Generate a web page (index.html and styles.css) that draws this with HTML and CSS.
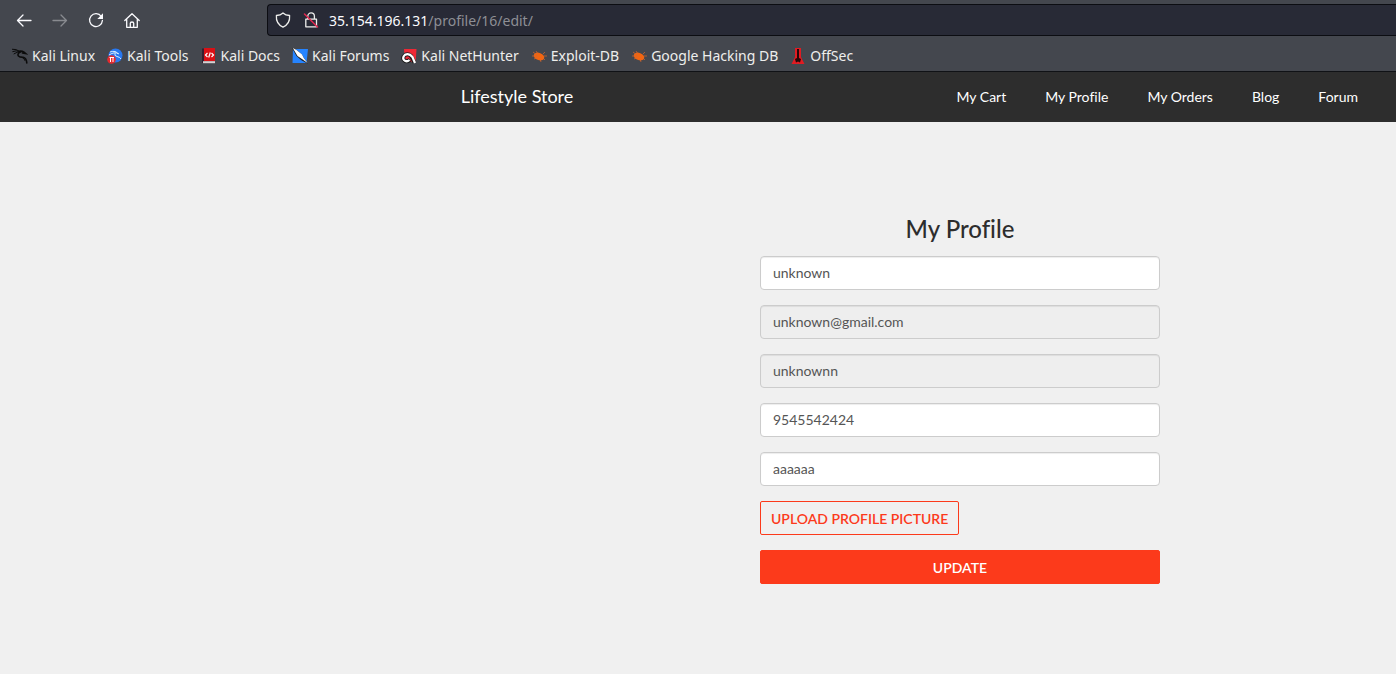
FILE: index.html
```
<!DOCTYPE html>
<html lang="en">
<head>
<meta charset="utf-8">
<title>My Profile - Lifestyle Store</title>
<link rel="stylesheet" href="styles.css">
</head>
<body>
<div class="browser">
  <div class="toolbar">
    <div class="controls">
      <button class="tool" aria-label="Back"><svg viewBox="0 0 16 16"><path d="M15 8.500H1.500M7 3 1.500 8.500 7 14"/></svg></button>
      <button class="tool tool-off" aria-label="Forward" disabled><svg viewBox="0 0 16 16"><path d="M1 8.500h13.500M9 3 14.500 8.500 9 14"/></svg></button>
      <button class="tool" aria-label="Reload"><svg viewBox="0 0 16 16"><path d="M13.300 4.500A6.400 6.400 0 1 0 14.400 8.500"/><path class="solid" d="M15 1.300v5.700H9.300z"/></svg></button>
      <button class="tool" aria-label="Home"><svg viewBox="0 0 16 16"><path d="M.8 8.500 8 1.700 15.200 8.500M2.700 7v8.300h10.600V7M6.300 15.300v-4.100q0-1.200 1.700-1.200t1.700 1.200v4.100"/></svg></button>
    </div>
    <div class="address">
      <svg class="address-icon" viewBox="0 0 16 16"><path d="M8 .9Q10.500 3.200 14.600 3.500 15.300 11.700 8 15.100.7 11.700 1.400 3.500 5.500 3.200 8 .9z"/></svg>
      <svg class="address-icon" viewBox="0 0 16 16"><path d="M4.800 7V4.200a3.300 3.300 0 0 1 6.600 0V7M2.800 7.200h10.700v7.600H2.800z"/><path class="slash" d="M1.500 2 14.500 15"/></svg>
      <span class="url"><span class="host">35.154.196.131</span>/profile/16/edit/</span>
    </div>
  </div>
  <nav class="bookmarks" aria-label="Bookmarks">
    <a href="#"><svg viewBox="0 0 16 16"><g fill="none" stroke="#0b0b0b" stroke-linecap="round"><path d="M.3 1.200Q4 .8 7.500 3.200M.8 3.500Q4 2 8 3.600M2 5.800Q5 3.500 8.500 4" /><path stroke-width="1.600" d="M7.500 3.200Q10 2.800 12 4.200L13.500 5.500 10.500 5M8 4Q5 6 6.500 8 8 9.500 11 9.300 14.500 10 14.800 15"/><path d="M10 9.300q2.500 1 3 3.200"/></g></svg>Kali Linux</a>
    <a href="#"><svg viewBox="0 0 16 16"><circle cx="8.500" cy="7.500" r="7" fill="#2878f0"/><path d="M3 4Q9 2 11 6M2 7Q8 3 12 6M8 5Q7 8 10 8.500T14 11" fill="none" stroke="#d9ecff"/><circle cx="4.500" cy="11.500" r="4.300" fill="#e5292e"/><path d="M2.500 9.500H7M3.500 9.500V14M6 9.500V14" stroke="#fff" fill="none"/></svg>Kali Tools</a>
    <a href="#"><svg viewBox="0 0 16 16"><path d="M1 .5h3V15H1z" fill="#352030"/><path d="M3 0h11v13H3z" fill="#d91015"/><path d="M2 13.200h12v2H2z" fill="#d9d2d2"/><path d="M6.500 5 4.500 7l2 2M10.500 5l2 2-2 2M9.300 4.500 7.700 9.500" fill="none" stroke="#fff" stroke-width="1.200"/></svg>Kali Docs</a>
    <a href="#"><svg viewBox="0 0 16 16"><path d="M1 1h15l-1.500 14H.5z" fill="#2684ff"/><path d="M0 0 4 1.500 9.500 6 12 10l3.800 5.800L9 12 4.500 8z" fill="#222"/><path d="M.8 0 4.500 2 9.800 6.300 11.800 10l3.700 5-5.500-4L5.500 8z" fill="#fff"/></svg>Kali Forums</a>
    <a href="#"><svg viewBox="0 0 16 16"><path d="M3 1h12.500l-.8 13H4z" fill="#ee2835"/><path d="M13.500 14.500 10 8Q7 5 4 7 1 9.500 3 12 5.500 14.500 9 12" fill="none" stroke="#1d1d1d" stroke-width="4"/><path d="M14 15 11.500 9Q8 4.500 4 6.800 1 9.500 3 12 5.500 14.500 8.500 12" fill="none" stroke="#fff" stroke-width="2.200"/></svg>Kali NetHunter</a>
    <a href="#"><svg viewBox="0 0 16 16"><ellipse cx="8" cy="8.500" rx="5.500" ry="3.600" transform="rotate(22 8 8.500)" fill="#f26511"/><path d="m2 4 4 3M5 3l2 3M1 8h5m-3 3 4-2m2 2 1 3m2-4 2 2m-1-4h3m-4-2 2-2" stroke="#d9682c" fill="none" stroke-width=".7"/></svg>Exploit-DB</a>
    <a href="#"><svg viewBox="0 0 16 16"><ellipse cx="8" cy="8.500" rx="5.500" ry="3.600" transform="rotate(22 8 8.500)" fill="#f26511"/><path d="m2 4 4 3M5 3l2 3M1 8h5m-3 3 4-2m2 2 1 3m2-4 2 2m-1-4h3m-4-2 2-2" stroke="#d9682c" fill="none" stroke-width=".7"/></svg>Google Hacking DB</a>
    <a href="#"><svg viewBox="0 0 16 16"><path d="M5 0h6v9l3.500 7h-13L5 9z" fill="#e11b22"/><path d="M7 1h2v9l2 1-1 3.500-2-1-2 1L5 11l2-1z" fill="#260607"/></svg>OffSec</a>
  </nav>
</div>
<header class="site-header">
  <a class="brand" href="#">Lifestyle Store</a>
  <nav class="site-nav" aria-label="Main">
    <a href="#">My Cart</a>
    <a href="#">My Profile</a>
    <a href="#">My Orders</a>
    <a href="#">Blog</a>
    <a href="#">Forum</a>
  </nav>
</header>
<main class="page">
  <form class="profile">
    <h1>My Profile</h1>
    <input class="field" type="text" aria-label="Name" value="unknown">
    <input class="field" type="email" aria-label="Email" value="unknown@gmail.com" disabled>
    <input class="field" type="text" aria-label="Username" value="unknownn" disabled>
    <input class="field" type="tel" aria-label="Phone" value="9545542424">
    <input class="field" type="text" aria-label="Address" value="aaaaaa">
    <button class="button upload" type="button">UPLOAD PROFILE PICTURE</button>
    <button class="button update" type="submit">UPDATE</button>
  </form>
</main>
</body>
</html>
```
FILE: styles.css
```
* { box-sizing: border-box; }

body {
  margin: 0;
  background: #f0f0f0;
  color: #2d2d2d;
  font-family: Lato, "Liberation Sans", sans-serif;
  font-size: 14px;
  font-variant-ligatures: none;
}

a { color: inherit; text-decoration: none; }
button, input { font: inherit; font-variant-ligatures: none; }

.browser {
  background: #44474e;
  color: #eeeeec;
  border-bottom: 1px solid #101216;
  font-family: "Noto Sans", sans-serif;
}

.toolbar {
  display: flex;
  align-items: center;
  gap: 127px;
  height: 40px;
  padding-left: 16px;
}

.controls { display: flex; gap: 20px; }

.tool {
  width: 16px;
  height: 16px;
  padding: 0;
  border: 0;
  background: none;
  color: #fbfbfe;
}
.tool-off { color: #898b90; }

.tool svg, .address-icon {
  display: block;
  width: 16px;
  height: 16px;
  fill: none;
  stroke: currentColor;
  stroke-width: 1.3;
  stroke-linejoin: round;
  stroke-linecap: round;
}
.tool .solid { fill: currentColor; stroke: none; }
.address-icon .slash { stroke: #e22850; stroke-width: 1.5; }

.address {
  flex: 1;
  display: flex;
  align-items: center;
  gap: 12px;
  height: 32px;
  padding-left: 7px;
  border: 1px solid #0c0d12;
  border-right: 0;
  border-radius: 4px 0 0 4px;
  background: #282a36;
}
.url { margin-left: -2px; font-size: 14px; color: #8e8f95; white-space: nowrap; }
.host { color: #fbfbfe; }

.bookmarks {
  display: flex;
  align-items: center;
  gap: 12px;
  height: 31px;
  padding-left: 12px;
  white-space: nowrap;
}
.bookmarks a { display: flex; align-items: center; gap: 4px; }
.bookmarks svg { width: 16px; height: 16px; }

.site-header {
  display: grid;
  grid-template-columns: 33% 1fr auto;
  align-items: center;
  height: 50px;
  padding-bottom: 2px;
  background: #2d2d2d;
  color: #ffffff;
}
.brand { grid-column: 2; font-size: 18px; }
.site-nav { display: flex; gap: 39px; padding-right: 38px; }

.page {
  display: grid;
  grid-template-columns: 760fr 400px 236fr;
  padding: 92px 0;
}

.profile {
  grid-column: 2;
  display: flex;
  flex-direction: column;
  gap: 15px;
}
.profile h1 {
  margin: 0 0 -3px;
  font-size: 24px;
  line-height: 30px;
  font-weight: 500;
  text-align: center;
}

.field {
  width: 100%;
  height: 34px;
  padding: 5px 12px 7px;
  border: 1px solid #cccccc;
  border-radius: 4px;
  background: #ffffff;
  color: #555555;
  box-shadow: inset 0 1px 1px rgba(0, 0, 0, 0.075);
}
.field:disabled { background: #eeeeee; }

.button {
  height: 34px;
  padding: 0 10px;
  border: 1px solid #fc3a1b;
  border-radius: 2px;
  font-size: 14px;
  font-weight: 600;
}
.upload { align-self: flex-start; background: transparent; color: #fc3a1b; }
.update { background: #fc3a1b; color: #ffffff; }
```
